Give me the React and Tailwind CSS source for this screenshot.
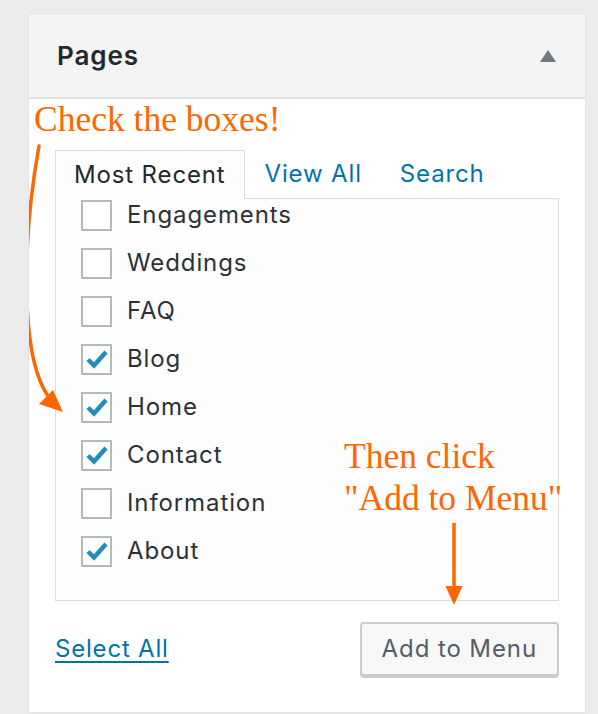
import React from "react";

const pages = [
  { label: "Engagements", checked: false },
  { label: "Weddings", checked: false },
  { label: "FAQ", checked: false },
  { label: "Blog", checked: true },
  { label: "Home", checked: true },
  { label: "Contact", checked: true },
  { label: "Information", checked: false },
  { label: "About", checked: true },
];

const Checkbox = ({ checked }) => (
  <span className="flex h-[31px] w-[31px] shrink-0 items-center justify-center border-2 border-[#b4b9be] bg-white">
    {checked && (
      <svg width="24" height="24" viewBox="0 0 24 24">
        <path d="M3 12.5 L9 18.5 L21 5" fill="none" stroke="#1e8cbe" strokeWidth="4.4" strokeLinejoin="miter" />
      </svg>
    )}
  </span>
);

export default function App() {
  return (
    <div
      className="min-h-[714px] bg-[#ebebeb] pl-[28px] pt-[13px] text-[#2c3136]"
      style={{ fontFamily: "Inter, 'Noto Sans', sans-serif" }}
    >
      <div className="relative h-[700px] w-[558px] border border-[#e5e5e5] bg-white">
        {/* header */}
        <div className="flex h-[85px] items-center justify-between border-b-2 border-[#e2e2e2] bg-[#f4f4f4] pl-[28px] pr-[29px]">
          <h3 className="text-[26px] font-semibold tracking-[0.9px] text-[#23282d]">Pages</h3>
          <svg width="16" height="12" viewBox="0 0 16 12">
            <path d="M8 0 L16 12 L0 12 Z" fill="#72777c" />
          </svg>
        </div>

        <div className="pl-[26px] pr-[26px] pt-[51px]">
          {/* tabs */}
          <div className="flex h-[48px] items-stretch text-[24px] tracking-[0.85px]">
            <div className="relative z-10 -mb-px flex items-center border border-b-0 border-[#dddddd] bg-[#fdfdfd] px-[18px] text-[#23282d]">
              Most Recent
            </div>
            <a className="flex items-center px-[20px] text-[#0073aa]">View All</a>
            <a className="flex items-center px-[18px] text-[#0073aa]">Search</a>
          </div>

          {/* panel */}
          <div className="h-[403px] overflow-hidden border border-[#dddddd] bg-[#fdfdfd] pl-[25px]">
            <ul className="-mt-[8px]">
              {pages.map((p) => (
                <li key={p.label} className="flex h-[48px] items-center gap-[15px] text-[24px] tracking-[0.9px]">
                  <Checkbox checked={p.checked} />
                  <span>{p.label}</span>
                </li>
              ))}
            </ul>
          </div>

          {/* footer */}
          <div className="mt-[21px] flex items-center justify-between">
            <a className="text-[24px] tracking-[0.8px] text-[#0073aa] underline decoration-2 underline-offset-[4px]">
              Select All
            </a>
            <button className="h-[54px] rounded-[4px] border-2 border-[#cccccc] bg-[#f7f7f7] px-[20px] text-[24px] tracking-[0.9px] text-[#555d66] shadow-[0_2px_0_#cccccc]">
              Add to Menu
            </button>
          </div>
        </div>

        {/* annotations */}
        <div
          className="absolute left-[5px] top-[84px] text-[35.5px] leading-[42px] text-[#ff6600]"
          style={{ fontFamily: "'Liberation Serif', serif" }}
        >
          Check the boxes!
        </div>
        <div
          className="absolute left-[315px] top-[421px] text-[35.5px] leading-[42px] text-[#ff6600]"
          style={{ fontFamily: "'Liberation Serif', serif" }}
        >
          Then click
          <br />
          "Add to Menu"
        </div>
        <svg className="pointer-events-none absolute left-0 top-0" width="558" height="700" viewBox="0 0 558 700">
          {/* curved arrow (page coords shifted by -28, -13) */}
          <path d="M10 132 C -6 220, -10 340, 19 382" fill="none" stroke="#ff6600" strokeWidth="3.5" strokeLinecap="round" />
          <path d="M34 398 L10 390 L24 376 Z" fill="#ff6600" />
          {/* vertical arrow */}
          <line x1="425" y1="509" x2="425" y2="574" stroke="#ff6600" strokeWidth="3.5" />
          <path d="M416.5 572 L433.5 572 L425 591 Z" fill="#ff6600" />
        </svg>
      </div>
    </div>
  );
}
